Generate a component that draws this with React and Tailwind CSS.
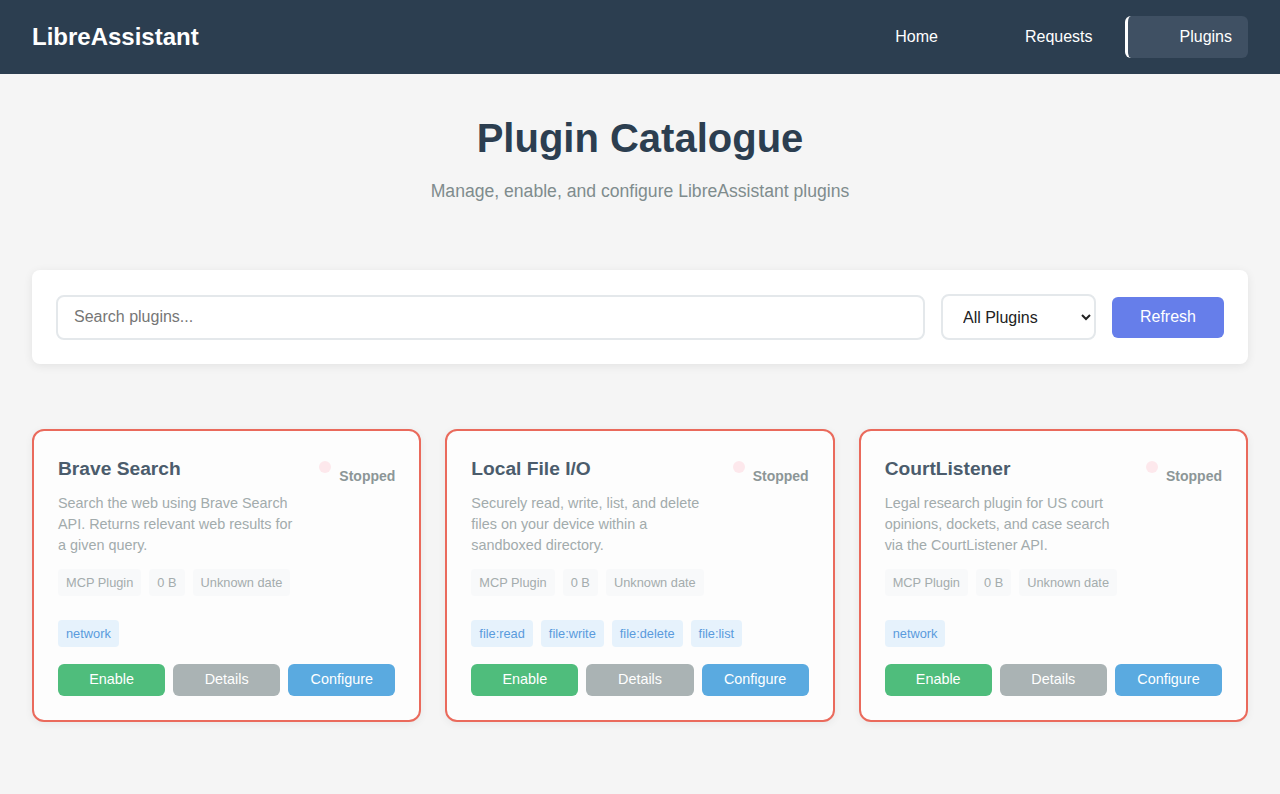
import { useState } from "react";

const plugins = [
  {
    name: "Brave Search",
    desc: "Search the web using Brave Search API. Returns relevant web results for a given query.",
    perms: ["network"],
  },
  {
    name: "Local File I/O",
    desc: "Securely read, write, list, and delete files on your device within a sandboxed directory.",
    perms: ["file:read", "file:write", "file:delete", "file:list"],
  },
  {
    name: "CourtListener",
    desc: "Legal research plugin for US court opinions, dockets, and case search via the CourtListener API.",
    perms: ["network"],
  },
];

function PluginCard({ plugin }) {
  return (
    <div className="bg-[#fdfdfd] border-2 border-[#ea6a5c] rounded-xl p-6 shadow-[0_2px_8px_rgba(0,0,0,0.06)]">
      <div className="flex justify-between gap-4">
        <div className="flex-1 max-w-[244px]">
          <h3 className="text-[1.2rem] font-bold leading-[26px] pt-px text-[#4b5c6c] mb-[11px]">{plugin.name}</h3>
          <p className="text-[0.9rem] leading-[21px] text-[#a2abac]">{plugin.desc}</p>
        </div>
        <div className="flex items-start gap-2 shrink-0">
          <span className="w-3 h-3 rounded-full bg-[#fde8ec] mt-1.5"></span>
          <span className="text-sm font-bold text-[#8c9697] mt-[11px] leading-5">Stopped</span>
        </div>
      </div>

      <div className="flex gap-2 mt-[13px]">
        {["MCP Plugin", "0 B", "Unknown date"].map((m) => (
          <span key={m} className="bg-[#f8f9fa] text-[#a4acad] text-[0.8rem] h-[27px] flex items-center px-2 rounded">
            {m}
          </span>
        ))}
      </div>

      <div className="flex gap-2 mt-[24px]">
        {plugin.perms.map((p) => (
          <span key={p} className="bg-[#e6f2fc] text-[#5a9bdc] text-[0.8rem] h-[27px] flex items-center px-2 rounded">
            {p}
          </span>
        ))}
      </div>

      <div className="grid grid-cols-3 gap-2 mt-[17px]">
        <button className="bg-[#4fbd7c] text-white text-[0.9rem] h-[32px] rounded-md">Enable</button>
        <button className="bg-[#aab3b4] text-white text-[0.9rem] h-[32px] rounded-md">Details</button>
        <button className="bg-[#5aaae0] text-white text-[0.9rem] h-[32px] rounded-md">Configure</button>
      </div>
    </div>
  );
}

export default function App() {
  const [search, setSearch] = useState("");
  const [filter, setFilter] = useState("all");

  return (
    <div className="min-h-screen bg-[#f5f5f5] font-['Liberation_Sans',Arial,sans-serif]">
      <header className="bg-[#2c3e50] h-[74px] px-8 flex items-center justify-between">
        <h1 className="text-white text-2xl font-bold">LibreAssistant</h1>
        <nav className="flex items-center text-white text-base">
          <a className="px-4 py-2.5">Home</a>
          <a className="px-4 py-2.5 ml-[55px]">Requests</a>
          <a className="ml-4 pl-[52px] pr-4 h-[42px] flex items-center bg-[#3f5063] border-l-[3px] border-white rounded-md">
            Plugins
          </a>
        </nav>
      </header>

      <main className="px-8">
        <div className="text-center pt-10">
          <h2 className="text-[40px] leading-[48px] font-bold text-[#2c3e50]">Plugin Catalogue</h2>
          <p className="mt-4 text-[1.1rem] leading-[26px] text-[#7f8c8d]">
            Manage, enable, and configure LibreAssistant plugins
          </p>
        </div>

        <div className="mt-[66px] bg-white rounded-lg shadow-[0_2px_10px_rgba(0,0,0,0.08)] px-6 py-6 flex items-center gap-4">
          <input
            className="flex-1 h-[45px] border-2 border-[#e4e8eb] rounded-lg px-4 text-base outline-none placeholder:text-[#767676]"
            placeholder="Search plugins..."
            value={search}
            onChange={(e) => setSearch(e.target.value)}
          />
          <select
            className="w-[155px] h-[46px] border-2 border-[#e4e8eb] rounded-lg px-4 text-base bg-white text-[#222]"
            value={filter}
            onChange={(e) => setFilter(e.target.value)}
          >
            <option value="all">All Plugins</option>
            <option value="enabled">Enabled</option>
            <option value="disabled">Disabled</option>
          </select>
          <button className="bg-[#667eea] text-white text-base h-[41px] px-7 rounded-md">Refresh</button>
        </div>

        <div className="grid grid-cols-3 gap-6 mt-[65px] pb-16">
          {plugins.map((p) => (
            <PluginCard key={p.name} plugin={p} />
          ))}
        </div>
      </main>
    </div>
  );
}
